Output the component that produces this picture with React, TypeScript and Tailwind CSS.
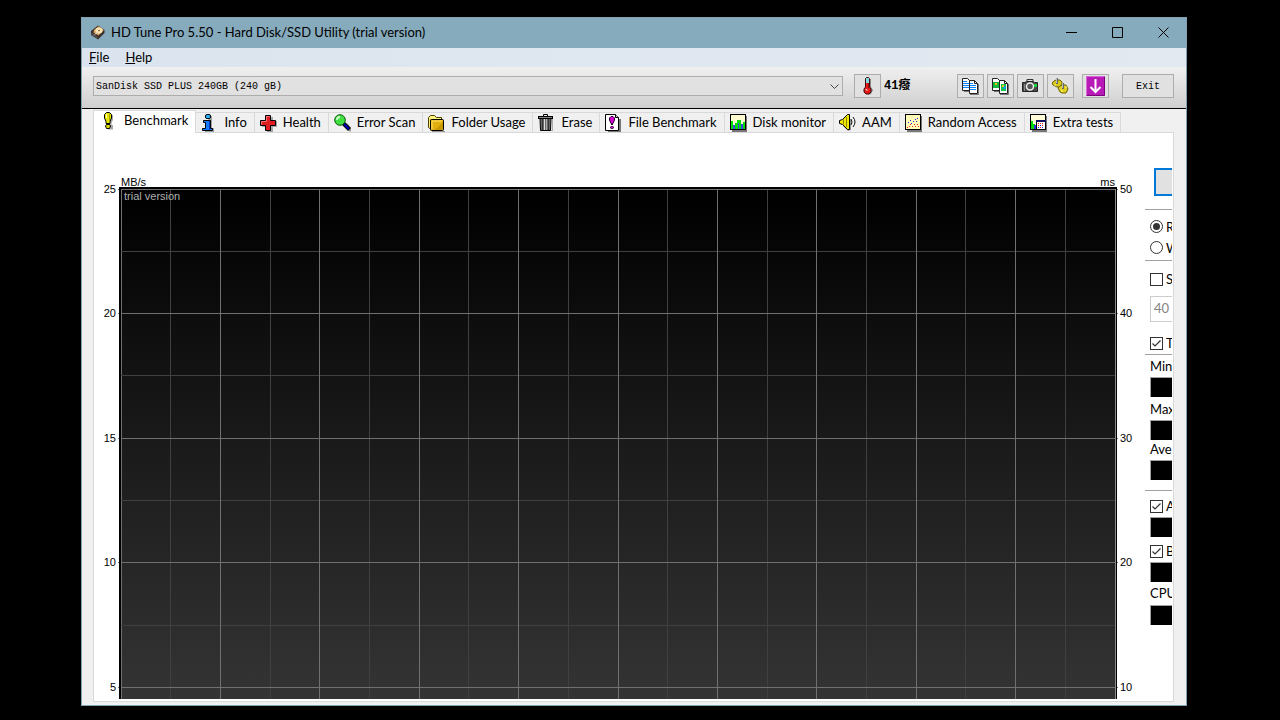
import { ReactNode } from "react";

const ui = "font-['Lato','Noto_Sans_CJK_SC',sans-serif]";
const mono = "font-['Liberation_Mono','Noto_Sans_CJK_SC',monospace]";

function AppIcon() {
  return (
    <svg width="16" height="16" viewBox="0 0 16 16">
      <path d="M1 6 8 .5 14.500 5V8L8 14.500 1 10Z" fill="#3b2f2a" />
      <path d="M4 5 8.500 1.200 13.800 5 8.500 10.500 3.500 7.500Z" fill="#e0a862" />
      <path d="M1.500 7.500 7.500 11.500V14L1.500 10Z" fill="#57504d" />
      <ellipse cx="9" cy="5.500" rx="3.500" ry="3" fill="#fbe3b4" />
      <ellipse cx="9" cy="5.500" rx="1" ry="0.800" fill="#8a5a28" />
      <path d="M4.500 9.500 8 7" stroke="#d8d8d8" strokeWidth="1" />
    </svg>
  );
}

function BenchmarkIcon() {
  return (
    <svg width="17" height="18" viewBox="0 0 17 18">
      <path d="M6 3H10V8L8.500 11V13H10V17.500H5V12Z" fill="#a8a8a8" />
      <path d="M3.500 .500H6.500L8.500 2.500V6L7 9.500V11.500H3V9.500L1.500 6V2.500Z" fill="#e6e600" stroke="#000" />
      <path d="M6.500 1.500V10" stroke="#a0a000" />
      <path d="M3.500 2V6" stroke="#ffffb0" />
      <path d="M3.500 12.500H6.500L7.500 14 6.500 16.500H3.500L2.500 14Z" fill="#dede00" stroke="#000" />
    </svg>
  );
}

function InfoIcon() {
  return (
    <svg width="17" height="18" viewBox="0 0 17 18">
      <path d="M7 2H11V6L11 14H13V18H4V16H8Z" fill="#a0a0a0" />
      <rect x="4.500" y=".500" width="5" height="4" rx="1.500" fill="#29b6ff" stroke="#000" />
      <path d="M2.500 6.500H9.500V14.500H11.500V16.500H1.500V14.500H4.500V8.500H2.500Z" fill="#1478ff" stroke="#000" />
      <path d="M8.500 7V16" stroke="#0040d0" />
    </svg>
  );
}

function HealthIcon() {
  return (
    <svg width="17" height="18" viewBox="0 0 17 18">
      <path d="M7 3H13V7H18V13H13V18H7V13H2V7H7Z" fill="#a5a5a5" />
      <path d="M5.500 1.500H10.500V6.500H15.500V11.500H10.500V16.500H5.500V11.500H.500V6.500H5.500Z" fill="#e11b22" stroke="#000" />
      <path d="M6.500 7.500V2.500H9.500M1.500 10.500V7.500H6" fill="none" stroke="#ff7373" />
    </svg>
  );
}

function ErrorScanIcon() {
  return (
    <svg width="17" height="18" viewBox="0 0 17 18">
      <path d="M10 12 13 9 18 15 16 18Z" fill="#a0a0a0" />
      <path d="M9 9 15.500 15.500" stroke="#000" strokeWidth="4" />
      <path d="M10 10 15 15" stroke="#0000c8" strokeWidth="2" />
      <circle cx="6" cy="6" r="5.300" fill="#3fe03f" stroke="#0b5c0b" />
      <path d="M3 6Q3 3 6 3" fill="none" stroke="#c8ffc8" strokeWidth="2" />
    </svg>
  );
}

function FolderIcon() {
  return (
    <svg width="17" height="18" viewBox="0 0 17 18">
      <path d="M4 17H17V6H18V18H4Z" fill="#999" />
      <path d="M.500 13.500V3.500L2.500 1.500H6.500L8.500 3.500H13.500V6H2.500V15Z" fill="#fff27a" stroke="#4b3c00" />
      <rect x="2.500" y="5.500" width="13" height="11" rx="1" fill="#e0b010" stroke="#000" />
      <path d="M4 15V7H14" fill="none" stroke="#ffe56a" />
      <path d="M7 16 15 8V16Z" fill="#be8e00" opacity="0.700" />
    </svg>
  );
}

function EraseIcon() {
  return (
    <svg width="17" height="18" viewBox="0 0 17 18">
      <path d="M14 4H15V17H5V16H14Z" fill="#aaa" />
      <path d="M2 4.500H13L12.500 16.500H2.500Z" fill="#666" stroke="#000" />
      <path d="M4.500 5V16" stroke="#333" />
      <path d="M6.500 5V16" stroke="#ddd" />
      <path d="M8.500 5V16" stroke="#aaa" />
      <path d="M10.500 5V16" stroke="#333" />
      <rect x=".500" y="2.500" width="14" height="2" fill="#888" stroke="#000" />
      <path d="M5.500 2V.500H9.500V2" fill="none" stroke="#000" />
    </svg>
  );
}

function FileBenchmarkIcon() {
  return (
    <svg width="17" height="18" viewBox="0 0 17 18">
      <path d="M3 16H14V5H16V18H3Z" fill="#777" />
      <path d="M.500 .500H10.500L13.500 3.500V16.500H.500Z" fill="#fff" stroke="#000" />
      <path d="M10.500 .500V3.500H13.500" fill="#ccc" stroke="#000" />
      <path d="M6 2.500H8L9.500 4V6L8 9.500H6L4.500 6V4Z" fill="#d400d4" stroke="#300030" />
      <path d="M7 9V11" stroke="#300030" strokeWidth="2" />
      <rect x="5.500" y="12.500" width="3" height="2" rx="1" fill="#d400d4" stroke="#300030" />
    </svg>
  );
}

function DiskMonitorIcon() {
  return (
    <svg width="17" height="18" viewBox="0 0 17 18">
      <path d="M2 17H17V2" fill="none" stroke="#777" strokeWidth="2" />
      <rect x=".500" y=".500" width="15" height="15" fill="#fffbd0" stroke="#000" />
      <path d="M1 15V7H3V11H5V9H7V6H11V10H13V8H15V15Z" fill="#00e000" />
      <path d="M3 15V11H5V15M8 15V9H9V15M11 15V10H13V15Z" fill="#3844e8" />
    </svg>
  );
}

function SpeakerIcon() {
  return (
    <svg width="17" height="18" viewBox="0 0 17 18">
      <path d="M4 12 9 17 12 16V5" fill="#999" />
      <path d="M.500 6.500 3.500 5.500 8.500 .500H10.500V15.500H8.500L3.500 10.500 .500 9.500Z" fill="#f0e800" stroke="#000" />
      <path d="M4.500 5.500V10.500M7.500 3V13" stroke="#8a8500" />
      <path d="M12 5Q14 8 12 11M14 3Q18 8 14 13" fill="none" stroke="#111" />
    </svg>
  );
}

function RandomAccessIcon() {
  return (
    <svg width="17" height="18" viewBox="0 0 17 18">
      <path d="M2 17H17V2" fill="none" stroke="#777" strokeWidth="2" />
      <rect x=".500" y=".500" width="15" height="15" fill="#fffbb8" stroke="#000" />
      <path d="M3 8h1v1h-1zM5 6h1v1h-1zM6 9h1v1h-1zM8 7h1v1h-1zM10 5h1v1h-1zM12 4h1v1h-1zM11 7h1v1h-1z" fill="#2020ff" />
      <path d="M2 13h1v1h-1zM4 12h1v1h-1zM5 10h1v1h-1zM7 12h1v1h-1zM9 10h1v1h-1zM10 12h1v1h-1zM12 10h1v1h-1zM13 12h1v1h-1z" fill="#f02020" />
    </svg>
  );
}

function ExtraTestsIcon() {
  return (
    <svg width="17" height="18" viewBox="0 0 17 18">
      <path d="M2 17H17V2" fill="none" stroke="#777" strokeWidth="2" />
      <rect x=".500" y=".500" width="15" height="15" fill="#fffbd8" stroke="#000" />
      <path d="M1 15V7H3V10H5V15Z" fill="#00dc00" />
      <path d="M4 11H6V15H4Z" fill="#3030e0" />
      <rect x="6.500" y="6.500" width="9" height="9" fill="#fff" stroke="#000" />
      <path d="M6 7H16" stroke="#101060" strokeWidth="2" />
      <path d="M8 9h1v1h-1zM10 9h1v1h-1zM12 9h1v1h-1zM8 11h1v1h-1zM12 11h1v1h-1zM10 13h1v1h-1z" fill="#e02020" />
      <path d="M10 11h1v1h-1zM8 13h1v1h-1zM12 13h1v1h-1z" fill="#2020e0" />
    </svg>
  );
}

function ThermometerIcon() {
  return (
    <svg width="17" height="18" viewBox="0 0 17 18">
      <path d="M11 2H12V10L14 13 12 17 9 18 11 14Z" fill="#888" />
      <path d="M6.500 1.500 7.500 .500H9.500L10.500 1.500V10L12 12V15L10 17H7L5 15V12L6.500 10Z" fill="#e81818" stroke="#401010" />
      <path d="M7 1H10V6H7Z" fill="#7fdce4" />
      <path d="M9.500 6V11" stroke="#a00808" />
      <path d="M6.500 12.500H8V14" fill="none" stroke="#ffc0c0" />
    </svg>
  );
}

function CopyTextIcon() {
  return (
    <svg width="17" height="18" viewBox="1 0 17 18">
      <path d="M3 14.500H8M17.500 7V17.500H9" fill="none" stroke="#777" />
      <path d="M1.500 1.500H6.500L9.500 4.500V13.500H1.500Z" fill="#fff" stroke="#222" />
      <path d="M2 4H6V5H2ZM2 6H8V7H2ZM2 8H8V9H2ZM2 10H8V11H2Z" fill="#0a84ff" />
      <path d="M8.500 3.500H13.500L16.500 6.500V16.500H8.500Z" fill="#fff" stroke="#222" />
      <path d="M13.500 3.500V6.500H16.500" fill="none" stroke="#222" />
      <path d="M9 6H12V7H9ZM9 8H15V9H9ZM9 10H15V11H9ZM9 12H15V13H9Z" fill="#0a84ff" />
    </svg>
  );
}

function CopyImageIcon() {
  return (
    <svg width="17" height="18" viewBox="1 0 17 18">
      <path d="M3 14.500H8M17.500 7V17.500H9" fill="none" stroke="#777" />
      <path d="M1.500 1.500H6.500L9.500 4.500V13.500H1.500Z" fill="#fff" stroke="#222" />
      <rect x="2" y="5" width="6" height="6" fill="#14b83a" />
      <rect x="4" y="6" width="2" height="2" fill="#f0c020" />
      <path d="M8.500 3.500H13.500L16.500 6.500V16.500H8.500Z" fill="#fff" stroke="#222" />
      <path d="M13.500 3.500V6.500H16.500" fill="none" stroke="#222" />
      <rect x="10" y="7" width="5" height="7" fill="#12c84a" />
      <rect x="12" y="9" width="3" height="3" fill="#18a0d8" />
      <rect x="11" y="8" width="2" height="2" fill="#f0c020" />
    </svg>
  );
}

function CameraIcon() {
  return (
    <svg width="17" height="18" viewBox="1 0 17 18">
      <path d="M6 4V2.500H12V4" fill="#ddd" stroke="#333" />
      <path d="M1.500 5.500H4L5.500 4.500H12.500L13.500 5.500H16.500V14.500H1.500Z" fill="#4a4a4a" stroke="#222" />
      <path d="M3.500 7V14" stroke="#888" />
      <circle cx="9" cy="9.500" r="3.500" fill="#555" stroke="#eee" strokeWidth="1.500" />
      <path d="M13 7H16V10H13Z" fill="#20d040" />
    </svg>
  );
}

function OptionsIcon() {
  return (
    <svg width="17" height="18" viewBox="1 0 17 18">
      <path d="M3 4 5 3 7 3 9 3 11 5 11 7 10 9 8 10 6 10 4 9 2 8 1 6Z" fill="#d8c818" stroke="#6a6000" />
      <path d="M9 9 11 8 13 8 15 8 16 10 17 12 16 14 15 16 13 16 11 16 9 15 8 13 7 11Z" fill="#e0d020" stroke="#6a6000" />
      <path d="M3 8H5M10 14H12M14 10H16" stroke="#fff680" />
      <path d="M6 1V7M12 6V12" stroke="#666" strokeWidth="2" />
      <path d="M5.500 1V6M11.500 6V11" stroke="#bbb" />
    </svg>
  );
}

function DownloadIcon() {
  return (
    <svg width="21" height="20" viewBox="0 0 21 20">
      <rect x="1" width="19" height="20" rx="1" fill="#b81ab8" />
      <path d="M1.500 19V.5H19" fill="none" stroke="#d868d8" />
      <path d="M19.500 1V19.500H2" fill="none" stroke="#780078" />
      <path d="M10.500 3V16M5.500 11 10.500 16 15.500 11" fill="none" stroke="#fff" strokeWidth="2" />
    </svg>
  );
}

const tabs = [
  { label: "Info", icon: <InfoIcon /> },
  { label: "Health", icon: <HealthIcon /> },
  { label: "Error Scan", icon: <ErrorScanIcon /> },
  { label: "Folder Usage", icon: <FolderIcon /> },
  { label: "Erase", icon: <EraseIcon /> },
  { label: "File Benchmark", icon: <FileBenchmarkIcon /> },
  { label: "Disk monitor", icon: <DiskMonitorIcon /> },
  { label: "AAM", icon: <SpeakerIcon /> },
  { label: "Random Access", icon: <RandomAccessIcon /> },
  { label: "Extra tests", icon: <ExtraTestsIcon /> },
];

function ToolButton({ label, children }: { label: string; children: ReactNode }) {
  return (
    <button aria-label={label} className="flex h-6 w-[27px] shrink-0 items-center justify-center border border-[#adadad] bg-[#e1e1e1]">
      {children}
    </button>
  );
}

function CaptionButton({ label, d }: { label: string; d: string }) {
  return (
    <button aria-label={label} className="flex h-full w-[46px] items-center justify-center pb-px pl-px">
      <svg width="11" height="11" viewBox="0 0 11 11">
        <path d={d} fill="none" stroke="#000" />
      </svg>
    </button>
  );
}

function TitleBar() {
  return (
    <header className="flex h-[30px] items-center bg-[#86abbd] pl-2">
      <AppIcon />
      <h1 className="ml-[5px] flex-1 text-[13px] whitespace-nowrap">HD Tune Pro 5.50 - Hard Disk/SSD Utility (trial version)</h1>
      <CaptionButton label="Minimize" d="M0 5.500H11" />
      <CaptionButton label="Maximize" d="M.5 .5H10.500V10.500H.5Z" />
      <CaptionButton label="Close" d="M.5 .5 10.500 10.500M10.500 .5 .5 10.500" />
    </header>
  );
}

function Toolbar() {
  return (
    <div className="flex h-[42px] items-start border-b border-black bg-gradient-to-b from-[#f0f0f0] to-[#cfcfcf] pt-[7px] pr-3 pl-[11px]">
      <div className="relative mt-0.5 flex-1">
        <select aria-label="Drive" className={`block h-5 w-full appearance-none border border-[#adadad] bg-[#e1e1e1] px-0.5 text-[10px] ${mono}`}>
          <option>SanDisk SSD PLUS 240GB (240 gB)</option>
        </select>
        <svg className="pointer-events-none absolute top-2 right-1" width="9" height="6" viewBox="0 0 9 6">
          <path d="M.5 .5 4.500 4.500 8.500 .5" fill="none" stroke="#444" />
        </svg>
      </div>
      <div className="ml-[11px] flex w-[103px] items-center gap-[3px]">
        <ToolButton label="Temperature"><ThermometerIcon /></ToolButton>
        <span className={`text-xs font-bold ${mono}`}>41癈</span>
      </div>
      <div className="flex gap-[3px]">
        <ToolButton label="Copy text"><CopyTextIcon /></ToolButton>
        <ToolButton label="Copy image"><CopyImageIcon /></ToolButton>
        <ToolButton label="Screenshot"><CameraIcon /></ToolButton>
        <ToolButton label="Options"><OptionsIcon /></ToolButton>
      </div>
      <div className="ml-2 flex gap-[13px]">
        <ToolButton label="Save"><DownloadIcon /></ToolButton>
        <button className={`h-6 w-[52px] border border-[#adadad] bg-[#e1e1e1] text-[10px] ${mono}`}>Exit</button>
      </div>
    </div>
  );
}

function TabBar() {
  return (
    <nav className="relative z-10 flex h-[22px] items-end text-[13px] whitespace-nowrap">
      <button className="-mb-px flex h-[23px] items-center gap-1 border border-b-0 border-[#d9d9d9] bg-white pr-[7px] pb-0.5 pl-[9px]">
        <BenchmarkIcon />
        Benchmark
      </button>
      {tabs.map((tab) => (
        <button key={tab.label} className="flex h-5 items-center gap-1.5 border-t border-r border-[#d9d9d9] pr-[7px] pl-[5px]">
          {tab.icon}
          {tab.label}
        </button>
      ))}
    </nav>
  );
}

const step = 62.3;
const columns = Array.from({ length: 19 }, (_, i) => i + 1);
const rows = Array.from({ length: 9 }, (_, i) => i);

function Axis({ start, decrement, side }: { start: number; decrement: number; side: "left" | "right" }) {
  const left = side === "left";
  return (
    <svg className={left ? "h-full w-[25px] shrink-0 overflow-visible" : "h-full w-7 shrink-0 overflow-visible"}>
      {[0, 1, 2, 3, 4].map((i) => {
        const y = Math.floor(i * step * 2) + 2;
        return (
          <g key={i}>
            <rect x={left ? 24 : 0} y={y} width="1" height="1" fill="#707070" />
            <text x={left ? 22 : 3} y={y + 4} textAnchor={left ? "end" : "start"} className="text-[11px]">
              {start - i * decrement}
            </text>
          </g>
        );
      })}
    </svg>
  );
}

function Chart() {
  return (
    <section className="flex min-w-0 flex-1 flex-col pt-11 font-['Liberation_Sans',sans-serif] text-[11px] leading-[10px]">
      <div className="flex justify-between pr-[30px] pl-[27px]">
        <span>MB/s</span>
        <span>ms</span>
      </div>
      <div className="flex min-h-0 flex-1">
        <Axis side="left" start={25} decrement={5} />
        <div className="relative flex-1 border-t-2 border-r border-l-2 border-black">
          <svg className="block h-full w-full border-r border-[#8a8a8a] bg-linear-to-b/srgb from-black to-[#343434]" shapeRendering="crispEdges">
            <rect width="1" height="100%" fill="#707070" />
            {rows.filter((i) => i % 2).map((i) => (
              <rect key={i} y={Math.floor(i * step)} width="100%" height="1" fill="#404040" />
            ))}
            {columns.map((i) => (
              <line key={i} x1={`${i * 5}%`} x2={`${i * 5}%`} y1="0" y2="100%" stroke={i % 2 ? "#404040" : "#707070"} />
            ))}
            {rows.filter((i) => i % 2 === 0).map((i) => (
              <rect key={i} y={Math.floor(i * step)} width="100%" height="1" fill="#707070" />
            ))}
          </svg>
          <span className="absolute top-0.5 left-[3px] text-[#b0b0b0]">trial version</span>
        </div>
        <Axis side="right" start={50} decrement={10} />
      </div>
    </section>
  );
}

function Check({ label, checked, className }: { label: string; checked?: boolean; className: string }) {
  return (
    <label className={`flex h-4 items-center gap-[3px] pl-[5px] ${className}`}>
      <span className="relative h-[13px] w-[13px] shrink-0">
        <input type="checkbox" defaultChecked={checked} className="peer block h-[13px] w-[13px] appearance-none border border-[#333] bg-white" />
        <svg className="pointer-events-none absolute inset-0 hidden peer-checked:block" width="13" height="13" viewBox="0 0 13 13">
          <path d="M2.500 6.500 5 9 10.500 3.500" fill="none" stroke="#333" strokeWidth="1.200" />
        </svg>
      </span>
      {label}
    </label>
  );
}

function Mode({ label, checked }: { label: string; checked?: boolean }) {
  return (
    <label className="flex h-[21px] items-center gap-[3px] pl-[5px]">
      <input
        type="radio"
        name="mode"
        defaultChecked={checked}
        className="h-[13px] w-[13px] shrink-0 appearance-none rounded-full border border-[#333] bg-white bg-clip-content p-[2px] checked:bg-[#333]"
      />
      {label}
    </label>
  );
}

function Meter({ className }: { className?: string }) {
  return <div className={`ml-[5px] h-5 w-20 border-t border-l border-[#a0a0a0] bg-black ${className ?? ""}`} />;
}

function Divider() {
  return <hr className="h-px w-24 border-0 bg-[#a0a0a0]" />;
}

function SidePanel() {
  return (
    <aside className="mr-px w-[27px] shrink-0 overflow-hidden pt-[35px] text-[13px] leading-4 whitespace-nowrap">
      <button aria-label="Start" className="mb-[13px] ml-[9px] block h-7 w-16 border-2 border-[#0078d7] bg-[#e1e1e1]" />
      <Divider />
      <div className="pt-[6px] pb-[2px]">
        <Mode label="Read" checked />
        <Mode label="Write" />
      </div>
      <Divider />
      <Check label="Short stroke" className="mt-[10px]" />
      <input aria-label="Stroke size" defaultValue="40" disabled className="mt-[9px] mb-[13px] ml-[5px] block h-[26px] w-12 border border-[#ccc] bg-white px-[3px] pb-0.5 text-[#838383]" />
      <Check label="Transfer rate" checked className="mb-[3px]" />
      <Divider />
      <div className="mt-[3px] pl-[5px]">Minimum</div>
      <Meter className="mt-[3px]" />
      <div className="mt-1 pl-[5px]">Maximum</div>
      <Meter className="mt-[3px]" />
      <div className="mt-px pl-[5px]">Average</div>
      <Meter className="mt-[3px] mb-[10px]" />
      <Divider />
      <Check label="Access time" checked className="mt-[7px]" />
      <Meter className="mt-[3px]" />
      <Check label="Burst rate" checked className="mt-[6px]" />
      <Meter className="mt-[3px]" />
      <div className="mt-[3px] pl-[5px]">CPU usage</div>
      <Meter className="mt-1" />
    </aside>
  );
}

export default function App() {
  return (
    <div className={`flex h-screen bg-black pt-[17px] pr-[93px] pb-[14px] pl-[81px] text-black ${ui}`}>
      <main className="flex min-w-0 flex-1 flex-col border border-[#7fa3b5] bg-[#f0f0f0]">
        <TitleBar />
        <nav className="flex h-[19px] items-center gap-4 bg-gradient-to-r from-[#dbe4ee] to-[#e3e9f1] pl-[7px] text-[13px]">
          <button><u>F</u>ile</button>
          <button><u>H</u>elp</button>
        </nav>
        <Toolbar />
        <div className="flex min-h-0 flex-1 flex-col pt-px pr-3 pb-[3px] pl-[11px]">
          <TabBar />
          <div className="flex min-h-0 flex-1 border border-[#d9d9d9] bg-white pb-0.5">
            <Chart />
            <SidePanel />
          </div>
        </div>
      </main>
    </div>
  );
}
